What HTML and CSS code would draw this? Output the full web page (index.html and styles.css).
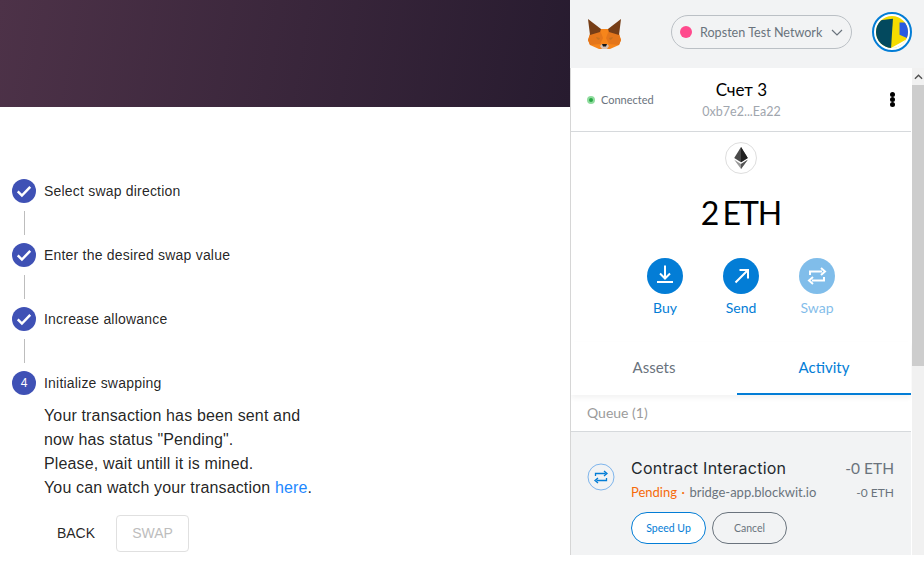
FILE: index.html
```html
<!DOCTYPE html>
<html lang="en">
<head>
<meta charset="utf-8">
<title>Swap</title>
<link rel="stylesheet" href="styles.css">
</head>
<body>
<div class="page">
  <main class="app">
    <div class="banner"></div>
    <div class="stepper">
      <div class="step">
        <span class="step-dot"><svg viewBox="0 0 24 24" width="20" height="20"><path d="M4.500 12.500l5 5L19.500 7" fill="none" stroke="#fff" stroke-width="3"/></svg></span>
        <span class="step-label">Select swap direction</span>
      </div>
      <div class="connector"></div>
      <div class="step">
        <span class="step-dot"><svg viewBox="0 0 24 24" width="20" height="20"><path d="M4.500 12.500l5 5L19.500 7" fill="none" stroke="#fff" stroke-width="3"/></svg></span>
        <span class="step-label">Enter the desired swap value</span>
      </div>
      <div class="connector"></div>
      <div class="step">
        <span class="step-dot"><svg viewBox="0 0 24 24" width="20" height="20"><path d="M4.500 12.500l5 5L19.500 7" fill="none" stroke="#fff" stroke-width="3"/></svg></span>
        <span class="step-label">Increase allowance</span>
      </div>
      <div class="connector"></div>
      <div class="step">
        <span class="step-dot step-num">4</span>
        <span class="step-label">Initialize swapping</span>
      </div>
      <div class="step-body">
        <p class="message">Your transaction has been sent and<br>now has status "Pending".<br>Please, wait untill it is mined.<br>You can watch your transaction <a class="link" href="#">here</a>.</p>
        <div class="actions">
          <button class="btn-back">BACK</button>
          <button class="btn-swap">SWAP</button>
        </div>
      </div>
    </div>
  </main>
  <aside class="wallet">
    <header class="wallet-top">
      <svg class="fox" viewBox="0 0 33 30" width="33" height="30">
        <path d="M12 10h9l10 5 2 6-2 5-9 4H11l-9-4-2-5 2-6z" fill="#f6851b"/>
        <path d="M0 21l2-6 10-4 3 8-3 6-10 1z" fill="#e4761b"/>
        <path d="M33 21l-2-6-10-4-3 8 3 6 10 1z" fill="#e4761b"/>
        <path d="M0 0l13 10-1 3-10 3z" fill="#763d16"/>
        <path d="M33 0L20 10l1 3 10 3z" fill="#763d16"/>
        <path d="M8 18l4 1-1 2-2-1z M25 18l-4 1 1 2 2-1z" fill="#c4701f"/>
        <path d="M12 27l2-2h5l2 2-2 3h-5z" fill="#d7c1b3"/>
        <path d="M14 25h5l-1 2.500h-3z" fill="#161616"/>
      </svg>
      <div class="network">
        <span class="network-dot"></span>
        <span class="network-name">Ropsten Test Network</span>
        <svg class="chevron" viewBox="0 0 12 7" width="12" height="7"><path d="M1 1l5 5 5-5" fill="none" stroke="#6a737d" stroke-width="1.200"/></svg>
      </div>
      <div class="avatar">
        <svg viewBox="0 0 34 34" width="34" height="34">
          <clipPath id="av"><circle cx="17" cy="17" r="17"/></clipPath>
          <g clip-path="url(#av)">
            <rect width="34" height="34" fill="#f5dc00"/>
            <path d="M0 5l18-2-2 31H0z" fill="#03495e"/>
            <path d="M25 7h9v17l-9-4z" fill="#2a5be0"/>
            <path d="M16 34l18-10v10z" fill="#fff"/>
          </g>
        </svg>
      </div>
    </header>
    <div class="wallet-body">
      <div class="wallet-scroll">
        <div class="account-bar">
          <div class="connected"><span class="connected-dot"></span>Connected</div>
          <div class="account">
            <div class="account-name">Счет 3</div>
            <div class="account-addr">0xb7e2...Ea22</div>
          </div>
          <div class="kebab"><i></i><i></i><i></i></div>
        </div>
        <div class="balance">
          <div class="token">
            <svg viewBox="0 0 16 26" width="14" height="22">
              <path d="M8 0L0 13l8 5 8-5z" fill="#4a4a4a"/>
              <path d="M8 0v18l8-5z" fill="#222"/>
              <path d="M0 15l8 11 8-11-8 5z" fill="#9a9a9a"/>
              <path d="M8 20v6l8-11z" fill="#555"/>
            </svg>
          </div>
          <div class="amount">2 ETH</div>
          <div class="wallet-actions">
            <div class="wallet-action">
              <span class="circle"><svg viewBox="0 0 36 36" width="36" height="36"><path d="M18 7.500V20M13 15.500l5 5 5-5M10 24h16" fill="none" stroke="#fff" stroke-width="2"/></svg></span>
              <span class="action-label">Buy</span>
            </div>
            <div class="wallet-action">
              <span class="circle"><svg viewBox="0 0 36 36" width="36" height="36"><path d="M12.500 24.500L25 12M16.500 12h8.500v8.500" fill="none" stroke="#fff" stroke-width="2"/></svg></span>
              <span class="action-label">Send</span>
            </div>
            <div class="wallet-action is-disabled">
              <span class="circle"><svg viewBox="0 0 36 36" width="36" height="36"><path d="M11 17v-3.500h12M22 10l4 3.500-4 3.500M25 19v3.500H13M14 19l-4 3.500 4 3.500" fill="none" stroke="#fff" stroke-width="2"/></svg></span>
              <span class="action-label">Swap</span>
            </div>
          </div>
        </div>
        <div class="tabs">
          <div class="tab tab-assets">Assets</div>
          <div class="tab tab-activity is-active">Activity</div>
        </div>
        <div class="queue">Queue (1)</div>
        <div class="tx">
          <span class="tx-icon"><svg viewBox="0 0 28 28" width="28" height="28"><circle cx="14" cy="14" r="13" fill="none" stroke="#7fb5ec" stroke-width="1"/><path d="M8.500 13v-2.500h10M17 8l3 2.500-3 2.500M19.500 15v2.500h-10M11 15l-3 2.500 3 2.500" fill="none" stroke="#037dd6" stroke-width="1.300"/></svg></span>
          <div class="tx-main">
            <div class="tx-row">
              <span class="tx-title">Contract Interaction</span>
              <span class="tx-amount">-0 ETH</span>
            </div>
            <div class="tx-row tx-row-sub">
              <span class="tx-sub"><span class="pending">Pending</span><span class="sep">·</span>bridge-app.blockwit.io</span>
              <span class="tx-amount2">-0 ETH</span>
            </div>
            <div class="tx-buttons">
              <span class="pill pill-blue">Speed Up</span>
              <span class="pill pill-gray">Cancel</span>
            </div>
          </div>
        </div>
      </div>
      <div class="scrollbar">
        <div class="scroll-btn"><svg viewBox="0 0 10 6" width="9" height="6"><path d="M1 5l4-4 4 4" fill="none" stroke="#505050" stroke-width="1.500"/></svg></div>
        <div class="scroll-thumb"></div>
      </div>
    </div>
  </aside>
</div>
</body>
</html>
```
FILE: styles.css
```css
* { box-sizing: border-box; }
html, body { margin: 0; padding: 0; background: #fff; }
body { width: 924px; height: 567px; overflow: hidden; font-family: "Liberation Sans", Arial, sans-serif; }
.page { display: flex; height: 555px; }
.app { width: 570px; flex: none; }
.banner { height: 107px; background: linear-gradient(100deg, #4d3248 0%, #271b2f 100%); }
.stepper { padding: 72px 0 0 12px; }
.step { display: flex; align-items: center; gap: 8px; height: 24px; }
.step-dot { width: 24px; height: 24px; border-radius: 50%; background: #3f51b5; display: flex; align-items: center; justify-content: center; color: #fff; font-size: 12px; flex: none; }
.step-label { font-size: 14px; letter-spacing: 0.2px; color: rgba(0,0,0,.87); }
.connector { width: 1px; height: 24px; margin: 8px 0 8px 12px; background: #bdbdbd; }
.step-body { padding: 9px 0 0 32px; }
.message { margin: 0; font-size: 16px; line-height: 24px; letter-spacing: 0.15px; color: rgba(0,0,0,.87); }
.link { color: #1e88ff; text-decoration: none; }
.actions { display: flex; gap: 8px; margin-top: 15px; }
.btn-back, .btn-swap { font-family: inherit; font-size: 14px; height: 37px; border-radius: 4px; padding: 0 0 1px; background: transparent; }
.btn-back { width: 64px; border: 0; color: rgba(0,0,0,.87); }
.btn-swap { width: 73px; border: 1px solid #e0e0e0; color: #bdbdbd; }
.wallet { width: 354px; flex: none; display: flex; flex-direction: column; font-family: Lato, sans-serif; border-left: 1px solid #d6d6d6; }
.wallet-top { height: 68px; flex: none; background: #f2f3f4; display: flex; align-items: center; padding: 0 12px 4px 16px; margin-left: -1px; }
.fox { flex: none; margin-top: 4px; margin-left: 2px; }
.network { margin-left: 50px; width: 181px; height: 34px; border: 1px solid #bbc0c5; border-radius: 17px; display: flex; align-items: center; padding: 0 8px 0 8px; color: #6a737d; }
.network-dot { width: 12px; height: 12px; border-radius: 50%; background: #ff4a8d; flex: none; }
.network-name { font-size: 12.600px; margin-left: 8px; flex: 1; white-space: nowrap; }
.chevron { flex: none; }
.avatar { margin-left: auto; width: 40px; height: 40px; border: 2px solid #037dd6; border-radius: 50%; padding: 0; display: flex; align-items: center; justify-content: center; background: #fff; }
.avatar svg { display: block; width: 32px; height: 32px; }
.wallet-body { flex: 1; display: flex; min-height: 0; }
.wallet-scroll { flex: 1; min-width: 0; overflow: hidden; display: flex; flex-direction: column; padding-right: 1px; }
.account-bar { height: 64px; flex: none; display: flex; align-items: center; justify-content: space-between; border-bottom: 1px solid #d6d9dc; padding: 0 15px 0 16px; }
.connected { display: flex; align-items: center; gap: 6px; font-size: 11px; color: #6a737d; width: 90px; }
.connected-dot { width: 8px; height: 8px; border-radius: 50%; background: #28a745; border: 2px solid #8fdc9e; }
.account { text-align: center; padding-top: 1px; }
.account-name { font-size: 17px; color: #000; line-height: 20px; }
.account-addr { font-size: 12.500px; color: #9fa6ae; line-height: 16px; margin-top: 4px; }
.kebab { width: 90px; display: flex; flex-direction: column; align-items: flex-end; gap: 0; padding-right: 1px; }
.kebab i { width: 5px; height: 5px; background: #000; border-radius: 50%; }
.balance { display: flex; flex-direction: column; align-items: center; padding-top: 10px; flex: none; }
.token { width: 32px; height: 32px; border: 1px solid #dedede; border-radius: 50%; display: flex; align-items: center; justify-content: center; }
.amount { font-size: 32px; letter-spacing: -1px; word-spacing: -3px; line-height: 40px; margin-top: 19px; color: #000; }
.wallet-actions { display: flex; gap: 40px; margin-top: 25px; }
.wallet-action { display: flex; flex-direction: column; align-items: center; width: 36px; }
.circle { width: 36px; height: 36px; border-radius: 50%; background: #037dd6; display: block; }
.circle svg { display: block; }
.action-label { font-size: 14px; color: #037dd6; margin-top: 5px; line-height: 18px; }
.is-disabled { opacity: .5; }
.tabs { display: flex; height: 53px; margin-top: 25px; flex: none; box-shadow: 0 3px 5px rgba(0,0,0,.05); }
.tab { display: flex; align-items: center; justify-content: center; font-size: 15px; color: #6a737d; }
.tab-assets { width: 166px; padding-bottom: 3px; }
.tab-activity { width: 174px; padding-bottom: 1px; }
.tab.is-active { color: #037dd6; border-bottom: 2px solid #037dd6; }
.queue { height: 37px; flex: none; display: flex; align-items: center; padding: 0 0 2px 16px; font-size: 14px; color: #9b9b9b; border-bottom: 1px solid #d6d9dc; }
.tx { flex: 1; background: #f2f3f4; display: flex; padding: 26px 17px 0 16px; gap: 16px; }
.tx-icon { width: 28px; height: 28px; flex: none; margin-top: 5px; }
.tx-icon svg { display: block; }
.tx-main { flex: 1; min-width: 0; }
.tx-row { display: flex; justify-content: space-between; align-items: center; }
.tx-title { font-family: Inter, sans-serif; font-size: 16px; letter-spacing: .25px; color: #24292e; line-height: 20px; }
.tx-amount { font-size: 15.500px; color: #6a737d; line-height: 20px; }
.tx-row-sub { margin-top: 6px; }
.tx-sub { font-size: 13px; color: #6a737d; line-height: 16px; }
.pending { color: #f66a0a; }
.sep { color: #f66a0a; margin: 0 4.500px; }
.tx-amount2 { font-size: 12px; color: #6a737d; }
.tx-buttons { display: flex; gap: 6px; margin-top: 12px; }
.pill { height: 32px; border-radius: 16px; display: flex; align-items: center; justify-content: center; font-size: 10.500px; width: 75px; }
.pill-blue { background: #fff; border: 1px solid #037dd6; color: #037dd6; }
.pill-gray { border: 1px solid #6a737d; color: #6a737d; }
.scrollbar { width: 12px; flex: none; background: #f1f1f1; display: flex; flex-direction: column; }
.scroll-btn { height: 17px; display: flex; align-items: center; justify-content: center; }
.scroll-thumb { height: 281px; background: #cdcdcd; }
```
